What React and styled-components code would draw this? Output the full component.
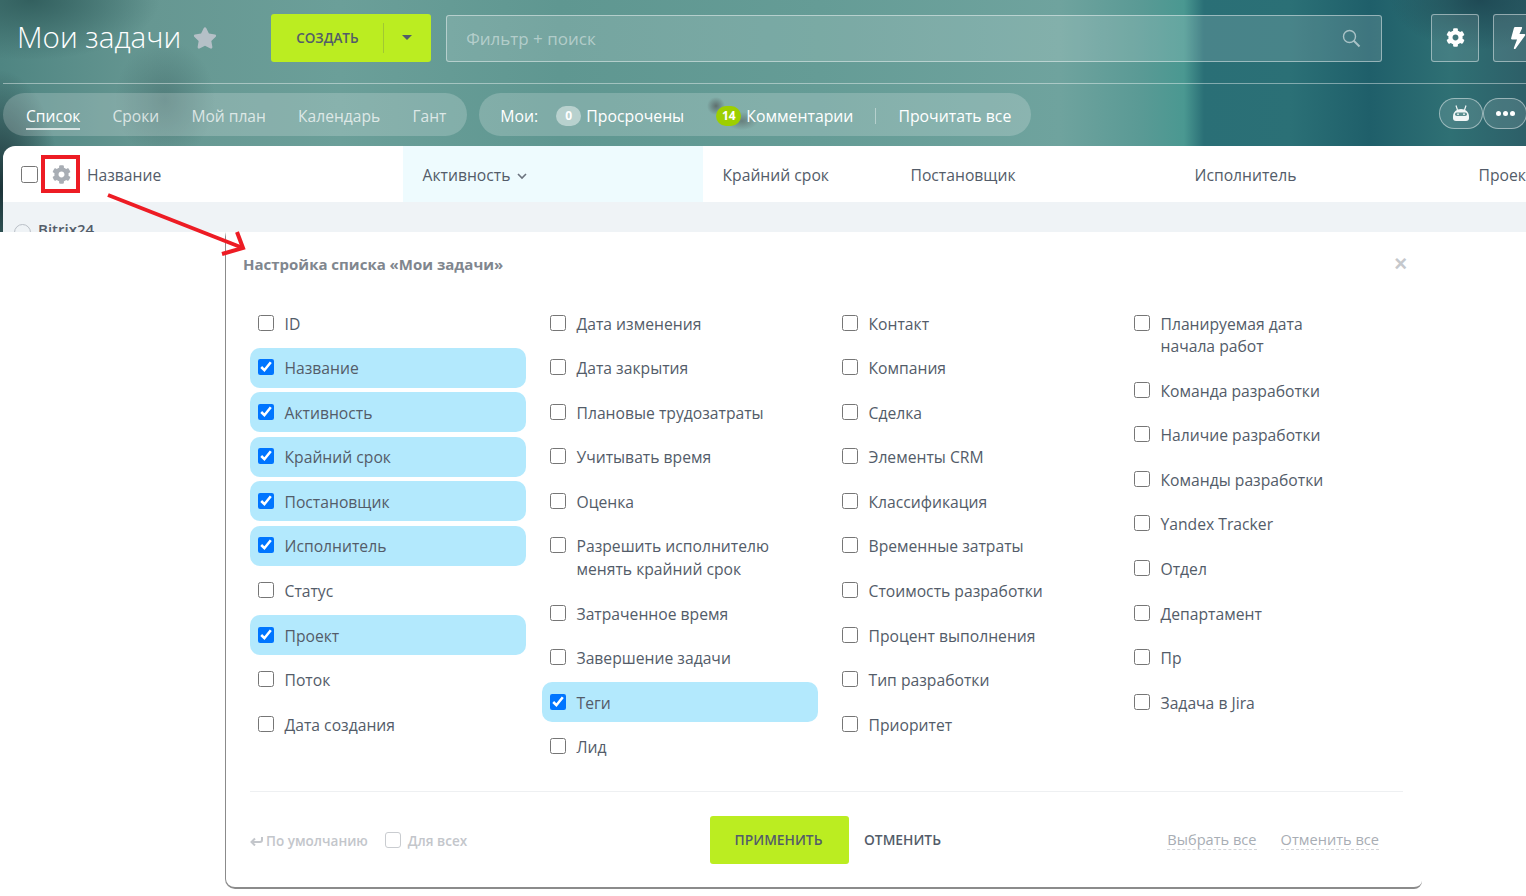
import React from "react";
import styled, { createGlobalStyle } from "styled-components";
import { FaCog, FaStar, FaBolt } from "react-icons/fa";

const GlobalStyle = createGlobalStyle`
  html, body { margin: 0; padding: 0; background: #fff; }
  body { font-family: "Open Sans", "Noto Sans", sans-serif; color: #535c69; }
`;

const columns = [
  [
    { label: "ID" },
    { label: "Название", on: true },
    { label: "Активность", on: true },
    { label: "Крайний срок", on: true },
    { label: "Постановщик", on: true },
    { label: "Исполнитель", on: true },
    { label: "Статус" },
    { label: "Проект", on: true },
    { label: "Поток" },
    { label: "Дата создания" },
  ],
  [
    { label: "Дата изменения" },
    { label: "Дата закрытия" },
    { label: "Плановые трудозатраты" },
    { label: "Учитывать время" },
    { label: "Оценка" },
    { label: "Разрешить исполнителю\nменять крайний срок" },
    { label: "Затраченное время" },
    { label: "Завершение задачи" },
    { label: "Теги", on: true },
    { label: "Лид" },
  ],
  [
    { label: "Контакт" },
    { label: "Компания" },
    { label: "Сделка" },
    { label: "Элементы CRM" },
    { label: "Классификация" },
    { label: "Временные затраты" },
    { label: "Стоимость разработки" },
    { label: "Процент выполнения" },
    { label: "Тип разработки" },
    { label: "Приоритет" },
  ],
  [
    { label: "Планируемая дата\nначала работ" },
    { label: "Команда разработки" },
    { label: "Наличие разработки" },
    { label: "Команды разработки" },
    { label: "Yandex Tracker" },
    { label: "Отдел" },
    { label: "Департамент" },
    { label: "Пр" },
    { label: "Задача в Jira" },
  ],
];

const Page = styled.div`
  position: relative;
  width: 1526px;
  height: 896px;
  overflow: hidden;
  background: #fff;
`;

const Top = styled.div`
  height: 232px;
  background:
    radial-gradient(ellipse 9px 9px at 716px 106px, rgba(40, 50, 50, 0.75), transparent),
    radial-gradient(ellipse 16px 9px at 742px 121px, rgba(40, 50, 50, 0.55), transparent),
    radial-gradient(ellipse 60px 120px at 0px 190px, #1c3338, transparent),
    radial-gradient(ellipse 130px 60px at 30px 0px, #33605f, transparent),
    radial-gradient(ellipse 50px 60px at 165px 100px, rgba(60, 100, 100, 0.5), transparent),
    radial-gradient(ellipse 90px 50px at 1480px 0px, #1f4a55, transparent),
    linear-gradient(90deg, #4f8582 0, #669792 150px, #6b9f99 340px, #5f9791 560px, #659c96 820px, #6fa39e 1060px, #5a9a95 1140px, #4a9891 1184px, #2a6f76 1204px, #2b7076 1290px, #1f5f6a 1370px, #2f7074 1450px, #2d5f68 1526px);
`;

const HeaderRow = styled.div`
  display: flex;
  align-items: center;
  height: 84px;
  box-sizing: border-box;
  margin-left: 3px;
  padding: 0 0 8px 14px;
  border-bottom: 1px solid rgba(255, 255, 255, 0.42);
`;

const Title = styled.h1`
  margin: -2px 0 0;
  font-size: 29.6px;
  font-weight: 300;
  color: #fff;
  line-height: 48px;
  white-space: nowrap;
`;

const StarIcon = styled(FaStar)`
  width: 24px;
  height: 24px;
  margin-left: 12px;
  color: rgba(190, 196, 204, 0.9);
  flex-shrink: 0;
`;

const CreateButton = styled.div`
  display: flex;
  align-items: center;
  width: 160px;
  height: 48px;
  margin-left: 54px;
  border-radius: 3px;
  background: #bbed21;
  flex-shrink: 0;
`;

const CreateLabel = styled.span`
  width: 113px;
  height: 30px;
  box-sizing: border-box;
  padding-left: 25px;
  line-height: 30px;
  font-size: 13.5px;
  font-weight: 600;
  color: #535c69;
  border-right: 1px solid rgba(83, 92, 105, 0.25);
`;

const Caret = styled.span`
  width: 0;
  height: 0;
  margin-left: 18px;
  border-left: 5px solid transparent;
  border-right: 5px solid transparent;
  border-top: 5px solid #535c69;
`;

const FilterBox = styled.div`
  display: flex;
  align-items: center;
  justify-content: space-between;
  width: 936px;
  height: 47px;
  margin: 1px 0 0 15px;
  padding: 0 20px 0 19px;
  box-sizing: border-box;
  border: 1px solid rgba(255, 255, 255, 0.45);
  border-radius: 3px;
  background: rgba(255, 255, 255, 0.14);
  font-size: 17px;
  color: rgba(255, 255, 255, 0.45);
  flex-shrink: 0;
`;

const SquareButton = styled.div`
  display: flex;
  align-items: center;
  justify-content: center;
  width: 48px;
  height: 48px;
  margin-left: ${(p) => p.$gap}px;
  box-sizing: border-box;
  border: 1px solid rgba(255, 255, 255, 0.45);
  border-radius: 3px;
  background: rgba(255, 255, 255, 0.1);
  color: #fff;
  flex-shrink: 0;
  svg { width: 19px; height: 19px; }
`;

const BoltIcon = styled(FaBolt)`
  && { width: 22px; height: 22px; margin-left: 1px; transform: skewX(-8deg); }
`;

const TabsRow = styled.div`
  display: flex;
  align-items: center;
  height: 43px;
  margin-top: 9px;
  padding-left: 3px;
`;

const Pill = styled.div`
  display: flex;
  align-items: center;
  height: 43px;
  box-sizing: border-box;
  padding: ${(p) => p.$padding};
  margin-right: 12px;
  border-radius: 22px;
  background: rgba(255, 255, 255, 0.2);
  font-size: ${(p) => p.$size}px;
  white-space: nowrap;
  flex-shrink: 0;
`;

const Tab = styled.span`
  position: relative;
  margin-right: 32.2px;
  color: ${(p) => (p.$active ? "#fff" : "rgba(255, 255, 255, 0.72)")};
  &:last-child { margin-right: 0; }
  ${(p) =>
    p.$active &&
    `&::after {
      content: "";
      position: absolute;
      left: 0;
      right: 0;
      bottom: -3px;
      height: 2px;
      background: rgba(255, 255, 255, 0.7);
    }`}
`;

const CounterLabel = styled.span`
  color: #fff;
`;

const Badge = styled.span`
  display: inline-flex;
  align-items: center;
  justify-content: center;
  width: 25px;
  height: 20px;
  margin-left: ${(p) => p.$gap}px;
  margin-right: 5px;
  border-radius: 10px;
  background: ${(p) => (p.$green ? "#9dcf00" : "rgba(255, 255, 255, 0.45)")};
  color: #fff;
  font-size: 12px;
  font-weight: 700;
`;

const PillDivider = styled.span`
  width: 1px;
  height: 16px;
  margin: 0 22px;
  background: rgba(255, 255, 255, 0.4);
`;

const RoundGroup = styled.div`
  display: flex;
  margin-left: auto;
  margin-right: -1px;
  margin-top: -3px;
`;

const RoundButton = styled.div`
  display: flex;
  align-items: center;
  justify-content: center;
  width: 44px;
  height: 31px;
  box-sizing: border-box;
  border: 1px solid rgba(255, 255, 255, 0.45);
  border-radius: 16px;
  background: rgba(255, 255, 255, 0.12);
`;

const Dot = styled.span`
  width: 5px;
  height: 5px;
  margin: 0 1px;
  border-radius: 50%;
  background: #fff;
`;

const TableHead = styled.div`
  display: flex;
  align-items: stretch;
  height: 56px;
  margin-top: 10px;
  margin-left: 3px;
  border-radius: 12px 0 0 0;
  background: #fff;
  font-size: 15.7px;
  color: #535c69;
  overflow: hidden;
`;

const NameCell = styled.div`
  display: flex;
  align-items: center;
  width: 400px;
  padding: 2px 0 0 18px;
  box-sizing: border-box;
  flex-shrink: 0;
`;

const HeadCheck = styled.input`
  width: 17px;
  height: 17px;
  margin: -2px 14px 0 0;
`;

const GearIcon = styled(FaCog)`
  width: 19px;
  height: 19px;
  margin: -2px 16px 0 0;
  color: #a8adb4;
`;

const HeadCell = styled.div`
  display: flex;
  align-items: center;
  width: ${(p) => p.$width}px;
  padding: 2px 0 0 19.5px;
  box-sizing: border-box;
  white-space: nowrap;
  flex-shrink: 0;
  background: ${(p) => (p.$active ? "#eefbfe" : "transparent")};
`;

const GroupBand = styled.div`
  display: flex;
  align-items: flex-start;
  height: 30px;
  margin-left: 3px;
  padding: 17px 0 0 11px;
  box-sizing: border-box;
  background: #eff3f6;
  overflow: hidden;
  font-size: 15px;
  font-weight: 600;
  color: #535c69;
`;

const CollapseMark = styled.span`
  width: 15px;
  height: 15px;
  margin: 5px 7px 0 0;
  border: 1px solid #b9bfc6;
  border-radius: 50%;
`;

const Lower = styled.div`
  display: flex;
  height: 657px;
`;

const Modal = styled.div`
  width: 1197px;
  margin-left: 225px;
  box-sizing: border-box;
  border-top: 5px solid #fff;
  border-left: 1px solid #8b8b8b;
  border-bottom: 2px solid #8b8b8b;
  border-radius: 0 0 8px 10px;
  background: #fff;
`;

const ModalHead = styled.div`
  display: flex;
  align-items: center;
  justify-content: space-between;
  height: 66px;
  padding: 0 14px 12px 17px;
  box-sizing: border-box;
`;

const ModalTitle = styled.div`
  font-size: 15px;
  font-weight: 700;
  color: #80868e;
`;

const CloseMark = styled.span`
  font-size: 22px;
  line-height: 22px;
  margin-top: -1px;
  margin-right: 1px;
  color: #c5c8cc;
  font-family: "Liberation Sans", sans-serif;
  font-weight: 700;
`;

const ColumnsGrid = styled.div`
  display: grid;
  grid-template-columns: repeat(4, 276px);
  column-gap: 16px;
  margin-left: 24px;
  height: 488px;
`;

const Column = styled.div`
  display: flex;
  flex-direction: column;
  gap: 4.6px;
`;

const Row = styled.label`
  display: flex;
  align-items: flex-start;
  padding: 9.5px 8px 8px;
  border-radius: 10px;
  font-size: 15.7px;
  line-height: 22.5px;
  color: #535c69;
  background: ${(p) => (p.$on ? "#b3e9fd" : "transparent")};
`;

const RowCheck = styled.input`
  width: 16px;
  height: 16px;
  margin: 2px 10.5px 0 0;
  flex-shrink: 0;
`;

const RowLabel = styled.span`
  white-space: pre-line;
`;

const Footer = styled.div`
  display: flex;
  align-items: center;
  margin: 0 19px 0 24px;
  padding-top: 24px;
  border-top: 1px solid #eef0f2;
`;

const FooterLeft = styled.div`
  display: flex;
  align-items: center;
  width: 460px;
  padding-top: 2px;
  box-sizing: border-box;
  font-size: 13.5px;
  font-weight: 600;
  color: #c3c6cb;
`;

const FooterCheck = styled.span`
  width: 14px;
  height: 14px;
  margin: -3px 7px 0 17px;
  border: 1px solid #c9ccd0;
  border-radius: 3px;
`;

const ApplyButton = styled.div`
  display: flex;
  align-items: center;
  justify-content: center;
  width: 139px;
  height: 48px;
  box-sizing: border-box;
  padding: 0 2px 2px 0;
  border-radius: 3px;
  background: #bbed21;
  font-size: 13.8px;
  font-weight: 600;
  color: #535c69;
`;

const CancelButton = styled.div`
  margin: -2px 0 0 15px;
  font-size: 13.8px;
  font-weight: 600;
  color: #535c69;
`;

const FooterLinks = styled.div`
  display: flex;
  gap: 24px;
  margin: -2px 0 0 auto;
  padding-right: 24px;
`;

const DashLink = styled.span`
  font-size: 14.6px;
  line-height: 20px;
  color: #a8adb4;
  border-bottom: 1px dashed #d4d6da;
`;

const MarkBox = styled.div`
  position: absolute;
  left: 41px;
  top: 155px;
  width: 39px;
  height: 38px;
  box-sizing: border-box;
  border: 4px solid #ed1c24;
`;

const ArrowSvg = styled.svg`
  position: absolute;
  left: 100px;
  top: 188px;
`;

const SearchIcon = () => (
  <svg width="19" height="19" viewBox="0 0 19 19" fill="none" stroke="rgba(255,255,255,0.55)">
    <circle cx="7.5" cy="7.5" r="6" strokeWidth="1.4" />
    <path d="M12 12l5.5 5.5" strokeWidth="2" />
  </svg>
);

const RobotIcon = () => (
  <svg width="18" height="16" viewBox="0 0 18 16" fill="#f1f6f6">
    <path d="M4 0.5l1.5 4.5M14 0.5l-1.5 4.5" stroke="#f1f6f6" strokeWidth="1.2" />
    <path d="M1 11.5C1 7 4.5 4 9 4s8 3 8 7.5V13a3 3 0 0 1-3 3H4a3 3 0 0 1-3-3z" />
    <rect x="3" y="7.5" width="12" height="3.5" rx="1.75" fill="#5b8f90" />
    <circle cx="6" cy="9.2" r="0.9" fill="#f1f6f6" />
    <circle cx="12" cy="9.2" r="0.9" fill="#f1f6f6" />
  </svg>
);

const ReturnIcon = () => (
  <svg width="13" height="10" viewBox="0 0 13 10" fill="none" stroke="#c3c6cb" strokeWidth="2" style={{ marginRight: 3 }}>
    <path d="M12 1v3a2 2 0 0 1-2 2H3" />
    <path d="M5 2.5L1.5 6 5 9.5" />
  </svg>
);

const Chevron = () => (
  <svg width="10" height="7" viewBox="0 0 10 7" fill="none" stroke="#6b737e" strokeWidth="1.6" style={{ marginLeft: 7, marginTop: 3 }}>
    <path d="M1 1l4 4 4-4" />
  </svg>
);

export default function App() {
  return (
    <Page>
      <GlobalStyle />
      <Top>
        <HeaderRow>
          <Title>Мои задачи</Title>
          <StarIcon />
          <CreateButton>
            <CreateLabel>СОЗДАТЬ</CreateLabel>
            <Caret />
          </CreateButton>
          <FilterBox>
            Фильтр + поиск
            <SearchIcon />
          </FilterBox>
          <SquareButton $gap={49}>
            <FaCog />
          </SquareButton>
          <SquareButton $gap={14}>
            <BoltIcon />
          </SquareButton>
        </HeaderRow>
        <TabsRow>
          <Pill $padding="2px 21px 0 23px" $size={15.6}>
            <Tab $active>Список</Tab>
            <Tab>Сроки</Tab>
            <Tab>Мой план</Tab>
            <Tab>Календарь</Tab>
            <Tab>Гант</Tab>
          </Pill>
          <Pill $padding="2px 20px 0 21px" $size={15.8}>
            <CounterLabel>Мои:</CounterLabel>
            <Badge $gap={18}>0</Badge>
            <CounterLabel>Просрочены</CounterLabel>
            <Badge $gap={32} $green>14</Badge>
            <CounterLabel>Комментарии</CounterLabel>
            <PillDivider />
            <CounterLabel>Прочитать все</CounterLabel>
          </Pill>
          <RoundGroup>
            <RoundButton>
              <RobotIcon />
            </RoundButton>
            <RoundButton>
              <Dot />
              <Dot />
              <Dot />
            </RoundButton>
          </RoundGroup>
        </TabsRow>
        <TableHead>
          <NameCell>
            <HeadCheck type="checkbox" readOnly />
            <GearIcon />
            Название
          </NameCell>
          <HeadCell $width={300} $active>
            Активность
            <Chevron />
          </HeadCell>
          <HeadCell $width={188}>Крайний срок</HeadCell>
          <HeadCell $width={284}>Постановщик</HeadCell>
          <HeadCell $width={284}>Исполнитель</HeadCell>
          <HeadCell $width={100}>Проект</HeadCell>
        </TableHead>
        <GroupBand>
          <CollapseMark />
          Bitrix24
        </GroupBand>
      </Top>
      <Lower>
        <Modal>
          <ModalHead>
            <ModalTitle>Настройка списка «Мои задачи»</ModalTitle>
            <CloseMark>×</CloseMark>
          </ModalHead>
          <ColumnsGrid>
            {columns.map((col, i) => (
              <Column key={i}>
                {col.map((item) => (
                  <Row key={item.label} $on={item.on}>
                    <RowCheck type="checkbox" defaultChecked={!!item.on} />
                    <RowLabel>{item.label}</RowLabel>
                  </Row>
                ))}
              </Column>
            ))}
          </ColumnsGrid>
          <Footer>
            <FooterLeft>
              <ReturnIcon />
              По умолчанию
              <FooterCheck />
              Для всех
            </FooterLeft>
            <ApplyButton>ПРИМЕНИТЬ</ApplyButton>
            <CancelButton>ОТМЕНИТЬ</CancelButton>
            <FooterLinks>
              <DashLink>Выбрать все</DashLink>
              <DashLink>Отменить все</DashLink>
            </FooterLinks>
          </Footer>
        </Modal>
      </Lower>
      <MarkBox />
      <ArrowSvg width="150" height="72" viewBox="0 0 150 72" fill="none" stroke="#ed1c24" strokeWidth="4">
        <path d="M8 7L143 60" />
        <path d="M137 44l6 16-21 6" />
      </ArrowSvg>
    </Page>
  );
}
